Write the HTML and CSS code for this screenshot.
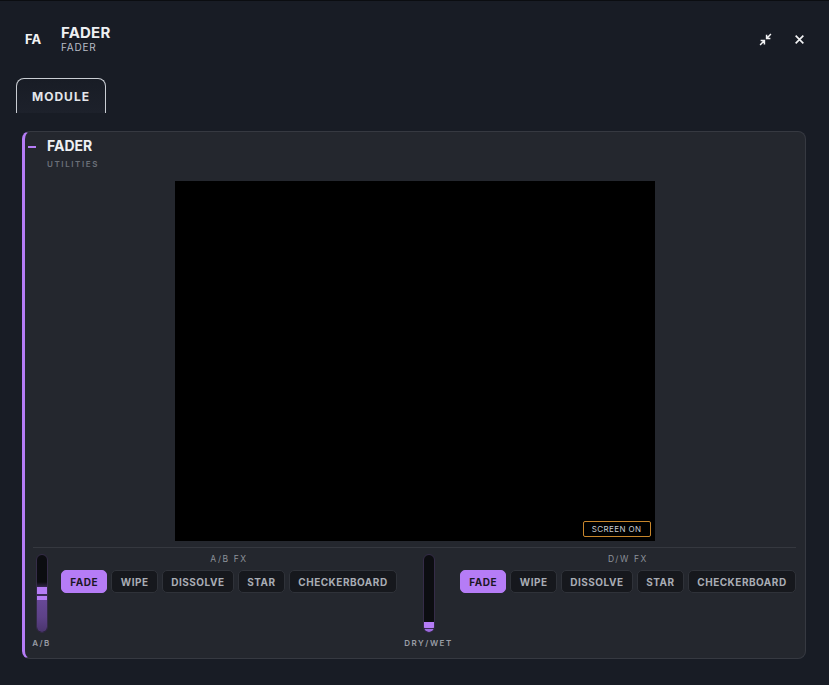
FILE: index.html
```html
<!DOCTYPE html>
<html lang="en">
<head>
    <meta charset="UTF-8">
    <meta name="viewport" content="width=device-width, initial-scale=1.0">
    <title>Fader</title>
    <link rel="stylesheet" href="styles.css">
</head>
<body>

    <div class="header">
        <div class="logo">FA</div>
        <div class="title-block">
            <div class="title">FADER</div>
            <div class="subtitle">FADER</div>
        </div>
        <div class="window-icons">
            <svg class="icon" width="13" height="13" viewBox="0 0 12 12">
                <path d="M7 1.5 V5 H10.5 M7 5 L11 1 M5 10.5 V7 H1.5 M5 7 L1 11" fill="none" stroke="#f2f3f5" stroke-width="1.4"/>
            </svg>
            <svg class="icon" width="11" height="11" viewBox="0 0 10 10">
                <path d="M1.5 1.5 L8.5 8.5 M8.5 1.5 L1.5 8.5" fill="none" stroke="#f2f3f5" stroke-width="1.5"/>
            </svg>
        </div>
    </div>

    <div class="tabs">
        <div class="tab">MODULE</div>
    </div>

    <div class="card">
        <div class="card-head">
            <div class="card-title">FADER</div>
            <div class="card-sub">UTILITIES</div>
        </div>

        <div class="screen">
            <span class="screen-badge">SCREEN ON</span>
        </div>

        <div class="divider"></div>

        <div class="controls">
            <div class="fader-col ab">
                <div class="fader">
                    <div class="fader-fill ab-fill"></div>
                    <div class="fader-thumb ab-thumb"></div>
                </div>
                <div class="fader-label">A/B</div>
            </div>

            <div class="fx-group">
                <div class="fx-label">A/B FX</div>
                <div class="fx-buttons">
                    <button class="fx-btn active">FADE</button>
                    <button class="fx-btn">WIPE</button>
                    <button class="fx-btn">DISSOLVE</button>
                    <button class="fx-btn">STAR</button>
                    <button class="fx-btn">CHECKERBOARD</button>
                </div>
            </div>

            <div class="fader-col dw">
                <div class="fader">
                    <div class="fader-thumb dw-thumb"></div>
                </div>
                <div class="fader-label">DRY/WET</div>
            </div>

            <div class="fx-group">
                <div class="fx-label">D/W FX</div>
                <div class="fx-buttons">
                    <button class="fx-btn active">FADE</button>
                    <button class="fx-btn">WIPE</button>
                    <button class="fx-btn">DISSOLVE</button>
                    <button class="fx-btn">STAR</button>
                    <button class="fx-btn">CHECKERBOARD</button>
                </div>
            </div>
        </div>
    </div>

</body>
</html>
```

FILE: styles.css
```css
body {
    margin: 0;
    padding: 0;
    background-color: #181c25;
    border-top: 1px solid #0b0d11;
    font-family: Inter, "Noto Sans", sans-serif;
    color: #eef0f3;
    height: 684px;
    overflow: hidden;
}

.header {
    display: flex;
    align-items: center;
    padding: 24px 24px 0 25px;
}

.logo {
    width: 36px;
    font-size: 13px;
    font-weight: 700;
    color: #f2f3f5;
}

.title-block {
    flex: 1;
}

.title {
    font-size: 15px;
    font-weight: 700;
    line-height: 16px;
    letter-spacing: 0.2px;
}

.subtitle {
    font-size: 10px;
    line-height: 12px;
    color: #b9bdc5;
    letter-spacing: 0.8px;
}

.window-icons {
    display: flex;
    align-items: center;
    gap: 22px;
}

.icon {
    display: block;
}

/* Tabs */
.tabs {
    margin-top: 25px;
    padding-left: 16px;
}

.tab {
    display: inline-flex;
    align-items: center;
    justify-content: center;
    width: 88px;
    height: 34px;
    border: 1px solid #c9cdd3;
    border-bottom: none;
    border-radius: 8px 8px 0 0;
    background: linear-gradient(#181c25, #1d212b);
    font-size: 12px;
    font-weight: 700;
    letter-spacing: 1px;
    color: #e3e6ea;
}

/* Module card */
.card {
    position: relative;
    margin: 18px 23px 0 22px;
    background-color: #24272e;
    border: 1px solid #363941;
    border-left: 3px solid #b57cf6;
    border-radius: 8px;
    padding: 5px 9px 9px 8px;
}

.card-head {
    position: relative;
    padding-left: 14px;
}

.card-head::before {
    content: "";
    position: absolute;
    left: -5px;
    top: 9px;
    width: 8px;
    height: 2px;
    background: #b57cf6;
}

.card-title {
    font-size: 14px;
    font-weight: 700;
    line-height: 18px;
    color: #eef0f3;
}

.card-sub {
    margin-top: 3px;
    font-size: 8px;
    line-height: 12px;
    letter-spacing: 1.6px;
    color: #6c717a;
    font-weight: 600;
}

.screen {
    position: relative;
    width: 480px;
    height: 360px;
    margin: 11px auto 0;
    background: #000;
}

.screen-badge {
    position: absolute;
    right: 4px;
    bottom: 4px;
    padding: 2px 8px;
    border: 1px solid #c8862c;
    border-radius: 2px;
    font-size: 8px;
    line-height: 10px;
    letter-spacing: 0.4px;
    color: #c9ccd2;
}

.divider {
    height: 1px;
    margin-top: 6px;
    background: #35383f;
}

/* Controls */
.controls {
    display: flex;
    gap: 11px;
    padding-top: 6px;
}

.fader-col {
    display: flex;
    flex-direction: column;
    align-items: center;
}

.fader-col.ab {
    width: 17px;
}

.fader-col.dw {
    width: 41px;
}

.fader {
    position: relative;
    width: 10px;
    height: 77px;
    background: #0c0d11;
    border: 1px solid #352c48;
    border-radius: 6px;
    overflow: hidden;
}

.fader-fill {
    position: absolute;
    left: 0;
    right: 0;
    bottom: 0;
}

.ab-fill {
    height: 50px;
    background: linear-gradient(#0c0d11, #6a4a9b 12px, #5d4288 70%, #4a356d);
}

.fader-thumb {
    position: absolute;
    left: 0;
    right: 0;
}

.ab-thumb {
    bottom: 32px;
    height: 13px;
    background: linear-gradient(#b57cf6 0 7px, #3a2b55 7px 9px, #b57cf6 9px);
}

.dw-thumb {
    bottom: 0;
    height: 10px;
    background: linear-gradient(#b57cf6 0 6px, #3a2b55 6px 7px, #9d6ae0 7px);
}

.fader-label {
    margin-top: 4px;
    font-size: 8px;
    line-height: 12px;
    letter-spacing: 1.5px;
    font-weight: 600;
    color: #9a9ea6;
    white-space: nowrap;
}

.fx-group {
    width: 336px;
}

.fx-label {
    text-align: center;
    font-size: 8.5px;
    line-height: 10px;
    letter-spacing: 1.6px;
    color: #8d929a;
    margin-bottom: 6px;
}

.fx-buttons {
    display: flex;
    gap: 4px;
}

.fx-btn {
    flex: 1 1 auto;
    min-width: 0;
    height: 23px;
    padding: 0 6px;
    background: #16181d;
    border: 1px solid #2f3239;
    border-radius: 5px;
    font-family: Inter, "Noto Sans", sans-serif;
    font-size: 10px;
    font-weight: 700;
    letter-spacing: 0.5px;
    color: #a9adb5;
    cursor: pointer;
}

.fx-btn.active {
    background: #b57cf6;
    border-color: #b57cf6;
    color: #1b1724;
}
```
